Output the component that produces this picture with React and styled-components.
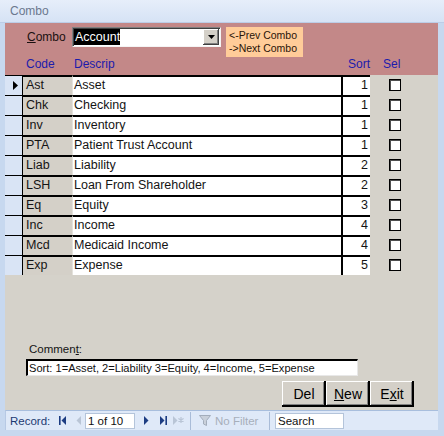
import React from 'react';
import styled, { createGlobalStyle } from 'styled-components';

const FONT = `"Liberation Sans", Arial, sans-serif`;

const Global = createGlobalStyle`
  html, body { margin: 0; padding: 0; background: #fff; }
  body { font-family: ${FONT}; }
`;

const COLS = '18px 49px 269px 29px 68px';

const Window = styled.div`
  width: 444px;
  height: 436px;
  background: #c7d8ef;
  display: flex;
  flex-direction: column;
  overflow: hidden;
`;

const TitleBar = styled.div`
  height: 23px;
  flex: none;
  box-sizing: border-box;
  background: linear-gradient(#e6eefa, #d6e3f5);
  border-bottom: 1px solid #bccde7;
  padding-left: 10px;
  display: flex;
  align-items: center;
  font: 12px ${FONT};
  color: #6b788e;
`;

const Frame = styled.div`
  flex: 1;
  display: flex;
  flex-direction: column;
  padding: 0 6px 6px 5px;
  border-bottom: 1px solid #b3c6e2;
  box-sizing: border-box;
`;

const Header = styled.div`
  height: 52px;
  flex: none;
  background: #c38888;
  display: flex;
  flex-direction: column;
`;

const TopRow = styled.div`
  display: flex;
  align-items: flex-start;
  padding-top: 4px;
  height: 30px;
`;

const ComboLabel = styled.div`
  width: 67px;
  box-sizing: border-box;
  padding-left: 22px;
  font: 12px ${FONT};
  line-height: 20px;
  color: #1a1010;
`;

const U = styled.span`
  text-decoration: underline;
  text-underline-offset: 1px;
`;

const ComboBox = styled.div`
  width: 149px;
  height: 20px;
  box-sizing: border-box;
  background: #fff;
  border-top: 1px solid #808080;
  border-left: 1px solid #808080;
  border-right: 1px solid #f4f4f4;
  border-bottom: 1px solid #f4f4f4;
  box-shadow: inset 1px 1px 0 #404040;
  display: flex;
  align-items: stretch;
  padding: 1px;
`;

const Selected = styled.span`
  align-self: center;
  background: #000;
  color: #fff;
  font: 12.5px ${FONT};
  line-height: 16px;
  height: 16px;
  padding: 0 0 0 1px;
`;

const DropBtn = styled.div`
  margin-left: auto;
  width: 16px;
  box-sizing: border-box;
  background: #d4d0c8;
  box-shadow: inset -1px -1px 0 #404040, inset 1px 1px 0 #fff, inset -2px -2px 0 #808080;
  display: flex;
  align-items: center;
  justify-content: center;
`;

const NavHint = styled.div`
  margin-left: 5px;
  width: 77px;
  height: 30px;
  box-sizing: border-box;
  background: #ffcc99;
  padding: 2px 0 0 3px;
  font: 10.5px ${FONT};
  line-height: 13px;
  color: #2a1408;
  white-space: nowrap;
`;

const LabelRow = styled.div`
  display: grid;
  grid-template-columns: ${COLS};
  height: 18px;
  font: 12px ${FONT};
  line-height: 14px;
  color: #1b1bac;
`;

const ColLabel = styled.div`
  padding-left: ${p => p.$pl || 0}px;
  padding-right: ${p => p.$pr || 0}px;
  text-align: ${p => p.$right ? 'right' : 'left'};
`;

const Grid = styled.div`
  display: flex;
  flex-direction: column;
  flex: none;
`;

const Row = styled.div`
  display: grid;
  grid-template-columns: ${COLS};
  height: 20px;
  font: 12.5px ${FONT};
  color: #141414;
`;

const Selector = styled.div`
  background: #d9e4f5;
  border-top: 1px solid #000;
  border-right: 1px solid #000;
  display: flex;
  align-items: center;
  padding-left: 8px;
`;

const Cell = styled.div`
  box-sizing: border-box;
  border-top: 2px solid #000;
  background: ${p => p.$grey ? '#d4d0c8' : '#fff'};
  border-left: ${p => p.$divider ? '2px solid #000' : p.$soft ? '1px solid #e4e2dc' : 'none'};
  padding-left: ${p => p.$pl || 0}px;
  padding-right: ${p => p.$pr || 0}px;
  text-align: ${p => p.$right ? 'right' : 'left'};
  line-height: 17px;
  white-space: nowrap;
  overflow: hidden;
`;

const SelCell = styled.div`
  background: #d5d2ca;
  display: flex;
  align-items: center;
  padding-left: 19px;
`;

const Check = styled.div`
  width: 12px;
  height: 12px;
  box-sizing: border-box;
  background: #fff;
  border: 1px solid #000;
  box-shadow: inset 1px 1px 0 #505050;
`;

const Lower = styled.div`
  height: 135px;
  flex: none;
  box-sizing: border-box;
  background: #d5d2ca;
  padding: 67px 24px 0 21px;
  display: flex;
  flex-direction: column;
`;

const CommentLabel = styled.div`
  font: 11.5px ${FONT};
  line-height: 14px;
  color: #141414;
  padding-left: 3px;
`;

const CommentBox = styled.div`
  margin-top: 3px;
  width: 332px;
  height: 17px;
  box-sizing: border-box;
  background: #fff;
  border-top: 2px solid #000;
  border-left: 2px solid #000;
  border-right: 1px solid #e8e8e8;
  border-bottom: 1px solid #e8e8e8;
  padding-left: 1px;
  font: 11.1px ${FONT};
  line-height: 14px;
  color: #101010;
  white-space: nowrap;
`;

const Buttons = styled.div`
  margin-top: 5px;
  display: flex;
  justify-content: flex-end;
`;

const Btn = styled.button`
  width: 44px;
  height: 26px;
  box-sizing: border-box;
  border: none;
  padding: 0;
  background: #d4d0c8;
  box-shadow: inset -2px -2px 0 #000, inset 1px 1px 0 #fff, inset -3px -3px 0 #808080, inset 0 1px 0 #f0f0f0;
  font: 14px ${FONT};
  color: #000;
`;

const StatusBar = styled.div`
  height: 20px;
  flex: none;
  box-sizing: border-box;
  background: #dfe9f8;
  border-top: 1px solid #a8bedd;
  border-left: 1px solid #b7c9e4;
  display: flex;
  align-items: center;
  padding-left: 4px;
  font: 11.5px ${FONT};
  color: #1d3a72;
`;

const StatusLabel = styled.span`
  width: 48px;
  flex: none;
`;

const Nav = styled.span`
  display: inline-flex;
  margin-left: ${p => p.$ml || 0}px;
  flex: none;
`;

const NavBox = styled.div`
  margin-left: ${p => p.$ml || 0}px;
  width: ${p => p.$w}px;
  height: 16px;
  box-sizing: border-box;
  background: #fff;
  border: 1px solid #b4c4da;
  padding-left: 2px;
  font: 11.5px ${FONT};
  line-height: 14px;
  color: #101010;
  flex: none;
`;

const Sep = styled.span`
  margin-left: ${p => p.$ml || 0}px;
  width: 1px;
  height: 18px;
  background: #a9bcd8;
  flex: none;
`;

const Disabled = styled.span`
  margin-left: 3px;
  width: 54px;
  color: #a7afbb;
  font: 11.5px ${FONT};
  flex: none;
`;

const rows = [
  ['Ast', 'Asset', 1],
  ['Chk', 'Checking', 1],
  ['Inv', 'Inventory', 1],
  ['PTA', 'Patient Trust Account', 1],
  ['Liab', 'Liability', 2],
  ['LSH', 'Loan From Shareholder', 2],
  ['Eq', 'Equity', 3],
  ['Inc', 'Income', 4],
  ['Mcd', 'Medicaid Income', 4],
  ['Exp', 'Expense', 5],
];

const NAVC = '#1c3c82';
const DIS = '#b9c5d6';

export default function App() {
  return (
    <>
      <Global />
      <Window>
        <TitleBar>Combo</TitleBar>
        <Frame>
          <Header>
            <TopRow>
              <ComboLabel><U>C</U>ombo</ComboLabel>
              <ComboBox>
                <Selected>Account</Selected>
                <DropBtn>
                  <svg width="7" height="4" viewBox="0 0 7 4"><path d="M0 0h7L3.5 4z" fill="#000" /></svg>
                </DropBtn>
              </ComboBox>
              <NavHint>
                &lt;-Prev Combo<br />-&gt;Next Combo
              </NavHint>
            </TopRow>
            <LabelRow>
              <div />
              <ColLabel $pl={3}>Code</ColLabel>
              <ColLabel $pl={2}>Descrip</ColLabel>
              <ColLabel $right $pr={0}>Sort</ColLabel>
              <ColLabel $pl={13}>Sel</ColLabel>
            </LabelRow>
          </Header>
          <Grid>
            {rows.map(([code, desc, sort], i) => (
              <Row key={code}>
                <Selector>
                  {i === 0 && (
                    <svg width="5" height="9" viewBox="0 0 5 9"><path d="M0 0L5 4.5L0 9z" fill="#000" /></svg>
                  )}
                </Selector>
                <Cell $grey $pl={3}>{code}</Cell>
                <Cell $soft $pl={1}>{desc}</Cell>
                <Cell $divider $right $pr={2}>{sort}</Cell>
                <SelCell><Check /></SelCell>
              </Row>
            ))}
          </Grid>
          <Lower>
            <CommentLabel>Commen<U>t</U>:</CommentLabel>
            <CommentBox>Sort: 1=Asset, 2=Liability 3=Equity, 4=Income, 5=Expense</CommentBox>
            <Buttons>
              <Btn>Del</Btn>
              <Btn><U>N</U>ew</Btn>
              <Btn>E<U>x</U>it</Btn>
            </Buttons>
          </Lower>
          <StatusBar>
            <StatusLabel>Record:</StatusLabel>
            <Nav $ml={1}>
              <svg width="7" height="9" viewBox="0 0 7 9"><rect x="0" y="0" width="1.6" height="9" fill={NAVC} /><path d="M7 0L2.5 4.5L7 9z" fill={NAVC} /></svg>
            </Nav>
            <Nav $ml={10}>
              <svg width="5" height="9" viewBox="0 0 5 9"><path d="M5 0L0.5 4.5L5 9z" fill={DIS} /></svg>
            </Nav>
            <NavBox $ml={4} $w={50}>1 of 10</NavBox>
            <Nav $ml={9}>
              <svg width="5" height="9" viewBox="0 0 5 9"><path d="M0 0L4.5 4.5L0 9z" fill={NAVC} /></svg>
            </Nav>
            <Nav $ml={11}>
              <svg width="7" height="9" viewBox="0 0 7 9"><path d="M0 0L4.5 4.5L0 9z" fill={NAVC} /><rect x="5.4" y="0" width="1.6" height="9" fill={NAVC} /></svg>
            </Nav>
            <Nav $ml={6}>
              <svg width="11" height="9" viewBox="0 0 11 9"><path d="M0 0L4.5 4.5L0 9z" fill={DIS} /><path d="M8 1v6M5.4 2.5l5.2 3M5.4 5.5l5.2-3" stroke={DIS} strokeWidth="1.2" /></svg>
            </Nav>
            <Sep $ml={6} />
            <Nav $ml={8}>
              <svg width="13" height="12" viewBox="0 0 13 12"><path d="M0.5 0.5h11L7.5 5.5v5l-3-1.5v-3.5z" fill="#c9d0da" stroke="#a3adbb" strokeWidth="1" /></svg>
            </Nav>
            <Disabled>No Filter</Disabled>
            <Sep $ml={0} />
            <NavBox $ml={5} $w={69}>Search</NavBox>
          </StatusBar>
        </Frame>
      </Window>
    </>
  );
}
